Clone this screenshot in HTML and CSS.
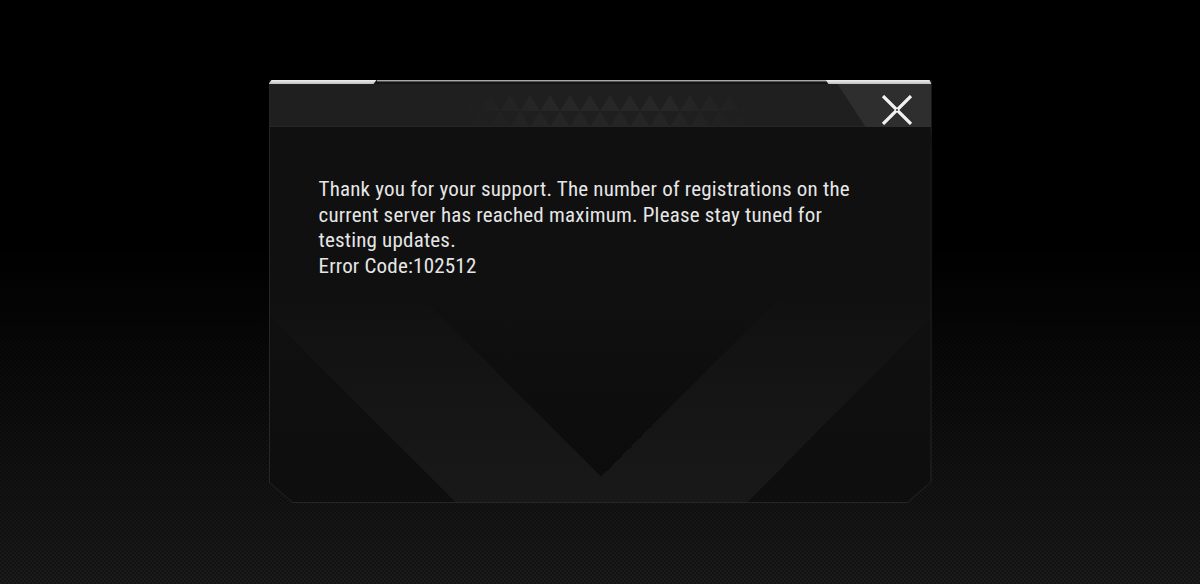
FILE: index.html
```html
<!DOCTYPE html>
<html lang="en">
<head>
  <meta charset="UTF-8" />
  <meta name="viewport" content="width=device-width, initial-scale=1.0"/>
  <title>Notice</title>
  <link rel="stylesheet" href="styles.css">
</head>
<body>
  <div class="dialog">
    <div class="dialog-edge">
      <span class="edge-hi edge-left"></span>
      <span class="edge-mid"></span>
      <span class="edge-hi edge-right"></span>
    </div>

    <div class="dialog-head">
      <svg class="head-pattern" width="300" height="32" viewBox="0 0 300 32">
        <defs>
          <pattern id="tri" width="20" height="32" patternUnits="userSpaceOnUse">
            <polygon points="0,16 10,0 20,16" fill="#272727"/>
            <polygon points="-10,32 0,16 10,32" fill="#252525"/>
            <polygon points="10,32 20,16 30,32" fill="#252525"/>
          </pattern>
          <linearGradient id="fade" x1="0" x2="1" y1="0" y2="0">
            <stop offset="0" stop-color="#fff" stop-opacity="0"/>
            <stop offset="0.3" stop-color="#fff" stop-opacity="1"/>
            <stop offset="0.7" stop-color="#fff" stop-opacity="1"/>
            <stop offset="1" stop-color="#fff" stop-opacity="0"/>
          </linearGradient>
          <mask id="fadeMask">
            <rect width="300" height="32" fill="url(#fade)"/>
          </mask>
        </defs>
        <rect width="300" height="32" fill="url(#tri)" mask="url(#fadeMask)"/>
      </svg>
    </div>

    <button class="dialog-close" aria-label="Close">
      <svg width="32" height="30" viewBox="0 0 32 30">
        <path d="M2 1 L30 29 M30 1 L2 29" stroke="#f2f2f2" stroke-width="3.2" fill="none"/>
        <circle cx="16" cy="15" r="1.1" fill="#3a3a3a"/>
      </svg>
    </button>

    <div class="dialog-body">
      <p class="message">
        Thank you for your support. The number of registrations on the current server has reached maximum. Please stay tuned for testing updates.<br>
        Error Code:102512
      </p>
    </div>
  </div>
</body>
</html>
```

FILE: styles.css
```css
* { box-sizing: border-box; }

html, body {
  height: 100%;
}

body {
  margin: 0;
  overflow: hidden;
  font-family: Roboto, 'Liberation Sans', sans-serif;
  background:
    linear-gradient(#000 0, #000 42%, rgba(0, 0, 0, 0) 100%),
    repeating-conic-gradient(rgba(255, 255, 255, 0.035) 0 25%, transparent 0 50%) 0 0 / 4px 4px,
    #131313;
}

.dialog {
  position: relative;
  display: flex;
  flex-direction: column;
  width: 663px;
  height: 423px;
  margin: 80px auto 0;
  background: #262626;
  clip-path: polygon(0 0, 100% 0, 100% calc(100% - 21px), calc(100% - 24px) 100%, 24px 100%, 0 calc(100% - 21px));
}

.dialog-edge {
  display: flex;
  height: 4px;
  background: #141414;
}

.edge-hi {
  height: 4px;
  background: linear-gradient(#f0f0f0, #bdbdbd);
}

.edge-left {
  width: 108px;
  clip-path: polygon(3px 0, 100% 0, calc(100% - 3px) 100%, 0 100%);
}

.edge-right {
  width: 106px;
  clip-path: polygon(0 0, calc(100% - 2px) 0, 100% 100%, 3px 100%);
}

.edge-mid {
  flex: 1;
  background: linear-gradient(#a8a8a8 0 1px, #555 1px 2px, #141414 2px);
}

.dialog-head {
  display: flex;
  justify-content: center;
  height: 43px;
  margin: 0 1px;
  padding: 11px 0 0 20px;
  background: #1f1f1f;
  border-bottom: 1px solid #262626;
}

.head-pattern {
  display: block;
}

.dialog-close {
  position: absolute;
  top: 4px;
  right: 0;
  display: flex;
  justify-content: flex-end;
  align-items: flex-start;
  width: 94px;
  height: 49px;
  padding: 11px 19px 0 0;
  border: none;
  background: #2e2e2e;
  cursor: pointer;
  clip-path: polygon(0 0, 100% 0, 100% 100%, 32px 100%);
}

.dialog-body {
  flex: 1;
  margin: 0 1px 1px;
  padding: 50px 49px 0;
  clip-path: polygon(0 0, 100% 0, 100% calc(100% - 20px), calc(100% - 23px) 100%, 23px 100%, 0 calc(100% - 20px));
  background:
    linear-gradient(#101010 0, #101010 160px, rgba(16, 16, 16, 0.55) 240px, rgba(16, 16, 16, 0) 350px),
    conic-gradient(from -45deg at 331px 350px, #0c0c0c 0 90deg, transparent 90deg),
    conic-gradient(from -45deg at 331px 521px, #181818 0 90deg, #0e0e0e 90deg);
}

.message {
  width: 545px;
  margin: 0;
  font-size: 21px;
  font-stretch: 78%;
  letter-spacing: 0.2px;
  line-height: 25.5px;
  color: #e6e6e6;
}
```
